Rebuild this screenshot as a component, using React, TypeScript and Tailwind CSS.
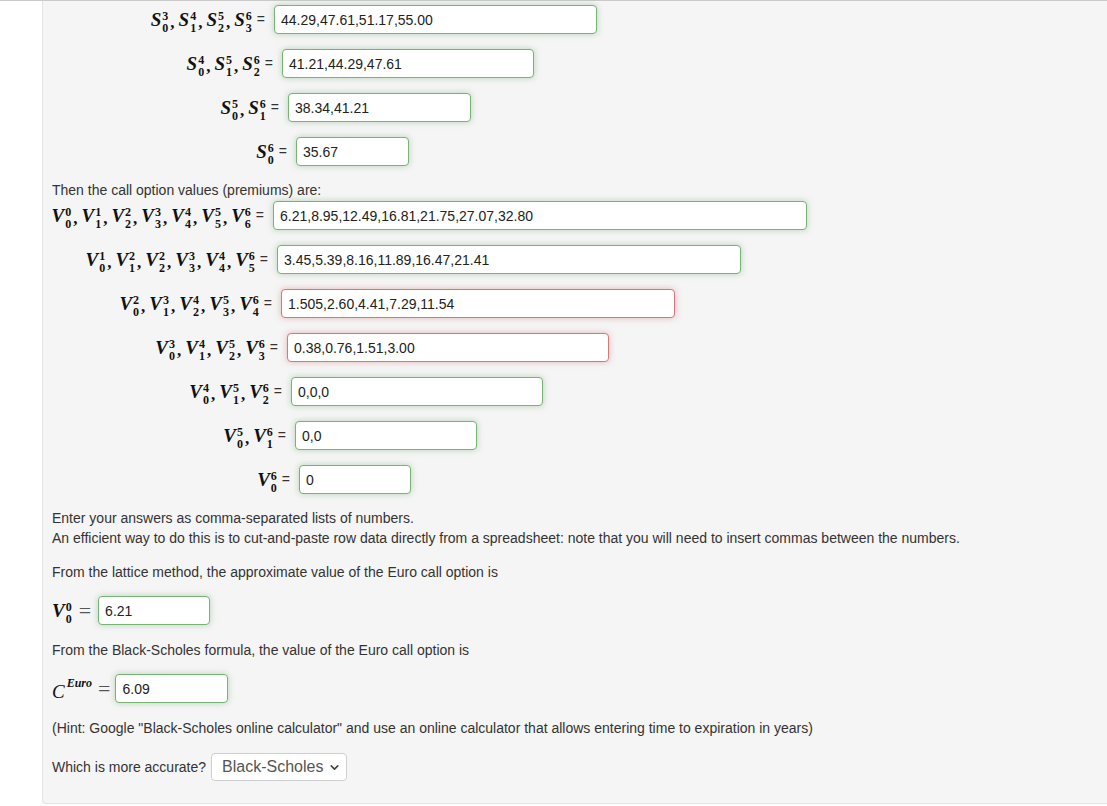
import React from "react";
import { ChevronDown } from "lucide-react";

type T = [string, string, string];

const Term = ({ t }: { t: T }) => (
  <span className="inline-flex items-center">
    <span className="italic font-bold text-[19px] leading-none">{t[0]}</span>
    <span className="inline-flex flex-col text-[12px] font-bold leading-[12px] ml-[1px] mt-[4px]">
      <span>{t[2]}</span>
      <span>{t[1]}</span>
    </span>
  </span>
);

const Label = ({ terms }: { terms: T[] }) => (
  <span className="inline-flex items-center font-['Liberation_Serif',serif] text-[#111]">
    {terms.map((t, i) => (
      <React.Fragment key={i}>
        <Term t={t} />
        {i < terms.length - 1 && <span className="text-[17px] font-bold ml-[2px] mr-[4px] mt-[7px]">,</span>}
      </React.Fragment>
    ))}
  </span>
);

const Box = ({ value, w, bad }: { value: string; w: string; bad?: boolean }) => (
  <input
    readOnly
    value={value}
    className={
      "h-[29px] rounded-[4px] border bg-white pl-[6px] text-[14px] text-[#222] outline-none " +
      w +
      (bad
        ? " border-[#d77878] shadow-[0_0_6px_rgba(215,120,120,0.5)]"
        : " border-[#76b476] shadow-[0_0_6px_rgba(118,180,118,0.5)]")
    }
  />
);

type RowDef = { terms: T[]; lw: string; iw: string; value: string; bad?: boolean };

const Row = ({ r }: { r: RowDef }) => (
  <div className="flex items-center h-[29px]">
    <div className={"flex items-center justify-end shrink-0 " + r.lw}>
      <Label terms={r.terms} />
      <span className="ml-[5px] text-[14px] text-[#333]">=</span>
    </div>
    <div className="ml-[9px]">
      <Box value={r.value} w={r.iw} bad={r.bad} />
    </div>
  </div>
);

const sRows: RowDef[] = [
  { terms: [["S", "0", "3"], ["S", "1", "4"], ["S", "2", "5"], ["S", "3", "6"]], lw: "w-[213px]", iw: "w-[323px]", value: "44.29,47.61,51.17,55.00" },
  { terms: [["S", "0", "4"], ["S", "1", "5"], ["S", "2", "6"]], lw: "w-[221px]", iw: "w-[252px]", value: "41.21,44.29,47.61" },
  { terms: [["S", "0", "5"], ["S", "1", "6"]], lw: "w-[227px]", iw: "w-[183px]", value: "38.34,41.21" },
  { terms: [["S", "0", "6"]], lw: "w-[235px]", iw: "w-[113px]", value: "35.67" },
];

const vRows: RowDef[] = [
  {
    terms: [["V", "0", "0"], ["V", "1", "1"], ["V", "2", "2"], ["V", "3", "3"], ["V", "4", "4"], ["V", "5", "5"], ["V", "6", "6"]],
    lw: "w-[212px]", iw: "w-[534px]", value: "6.21,8.95,12.49,16.81,21.75,27.07,32.80",
  },
  {
    terms: [["V", "0", "1"], ["V", "1", "2"], ["V", "2", "2"], ["V", "3", "3"], ["V", "4", "4"], ["V", "5", "6"]],
    lw: "w-[216px]", iw: "w-[464px]", value: "3.45,5.39,8.16,11.89,16.47,21.41",
  },
  {
    terms: [["V", "0", "2"], ["V", "1", "3"], ["V", "2", "4"], ["V", "3", "5"], ["V", "4", "6"]],
    lw: "w-[220px]", iw: "w-[394px]", value: "1.505,2.60,4.41,7.29,11.54", bad: true,
  },
  {
    terms: [["V", "0", "3"], ["V", "1", "4"], ["V", "2", "5"], ["V", "3", "6"]],
    lw: "w-[226px]", iw: "w-[322px]", value: "0.38,0.76,1.51,3.00", bad: true,
  },
  { terms: [["V", "0", "4"], ["V", "1", "5"], ["V", "2", "6"]], lw: "w-[230px]", iw: "w-[252px]", value: "0,0,0" },
  { terms: [["V", "0", "5"], ["V", "1", "6"]], lw: "w-[234px]", iw: "w-[182px]", value: "0,0" },
  { terms: [["V", "0", "6"]], lw: "w-[238px]", iw: "w-[112px]", value: "0" },
];

export default function App() {
  return (
    <div className="min-h-screen w-full overflow-hidden bg-white font-['Liberation_Sans',Arial,sans-serif] text-[14px] text-[#333]">
      <div className="h-px w-full bg-[#cacaca]" />
      <div className="ml-[42px] w-[1100px] rounded-bl-[4px] border-l border-b border-[#e3e3e3] bg-[#f5f5f5] pl-[9px] pt-[4px] pb-[22px]">
        <div className="flex flex-col gap-[15px]">
          {sRows.map((r, i) => (
            <Row key={i} r={r} />
          ))}
        </div>

        <p className="mt-[14px] leading-[20px]">Then the call option values (premiums) are:</p>

        <div className="mt-[1px] flex flex-col gap-[15px]">
          {vRows.map((r, i) => (
            <Row key={i} r={r} />
          ))}
        </div>

        <p className="mt-[14px] leading-[20px]">
          Enter your answers as comma-separated lists of numbers.
          <br />
          An efficient way to do this is to cut-and-paste row data directly from a spreadsheet: note that you will need to insert commas between the numbers.
        </p>

        <p className="mt-[14px] leading-[20px]">From the lattice method, the approximate value of the Euro call option is</p>

        <div className="mt-[14px] flex items-center h-[29px]">
          <Label terms={[["V", "0", "0"]]} />
          <span className="ml-[7px] mr-[7px] font-['Liberation_Serif',serif] text-[22px] text-[#555] leading-none">=</span>
          <Box value="6.21" w="w-[112px]" />
        </div>

        <p className="mt-[15px] leading-[20px]">From the Black-Scholes formula, the value of the Euro call option is</p>

        <div className="mt-[14px] flex items-center h-[29px]">
          <span className="inline-flex items-start font-['Liberation_Serif',serif] text-[#111]">
            <span className="italic text-[19px] leading-none mt-[5px]">C</span>
            <span className="italic font-bold text-[12px] leading-none ml-[2px]">Euro</span>
          </span>
          <span className="ml-[6px] mr-[5px] font-['Liberation_Serif',serif] text-[22px] text-[#555] leading-none">=</span>
          <Box value="6.09" w="w-[113px]" />
        </div>

        <p className="mt-[15px] leading-[20px]">
          (Hint: Google "Black-Scholes online calculator" and use an online calculator that allows entering time to expiration in years)
        </p>

        <div className="mt-[15px] flex items-center h-[28px]">
          <span>Which is more accurate?</span>
          <div className="relative ml-[5px]">
            <select
              defaultValue="bs"
              className="h-[28px] w-[136px] appearance-none rounded-[4px] border border-[#cfcfcf] bg-white pl-[10px] text-[16px] text-[#555] outline-none"
            >
              <option value="lattice">Lattice</option>
              <option value="bs">Black-Scholes</option>
            </select>
            <ChevronDown size={13} strokeWidth={3} className="pointer-events-none absolute right-[6px] top-[8px] text-[#444]" />
          </div>
        </div>
      </div>
    </div>
  );
}
